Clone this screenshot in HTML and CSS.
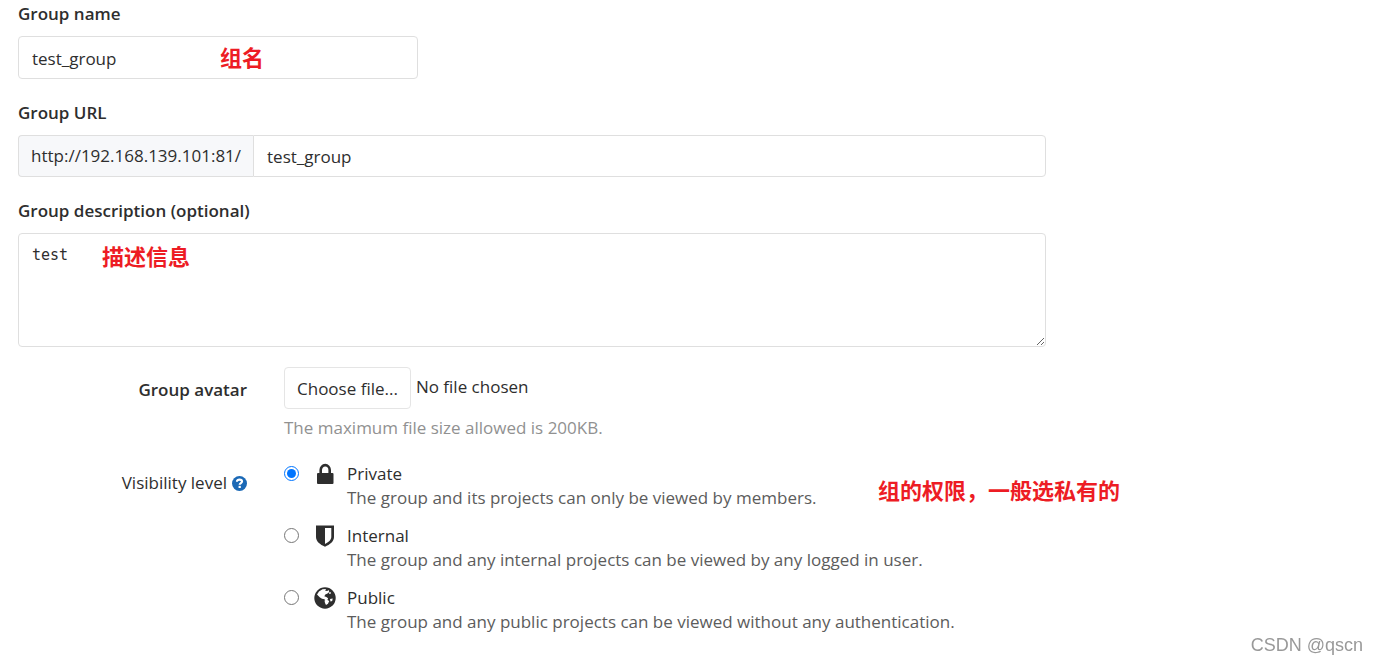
FILE: index.html
```html
<!DOCTYPE html>
<html lang="en">
<head>
<meta charset="utf-8">
<meta name="viewport" content="width=device-width, initial-scale=1">
<title>New group</title>
<link rel="stylesheet" href="styles.css">
</head>
<body>
<form class="group-form">
  <div class="field">
    <label class="field-label" for="group-name">Group name</label>
    <div class="field-control">
      <input class="text-input name-input" id="group-name" type="text" value="test_group">
      <span class="note note-name" lang="zh">组名</span>
    </div>
  </div>

  <div class="field">
    <label class="field-label" for="group-url">Group URL</label>
    <div class="input-group">
      <span class="input-prefix">http://192.168.139.101:81/</span>
      <input class="text-input url-input" id="group-url" type="text" value="test_group">
    </div>
  </div>

  <div class="field">
    <label class="field-label" for="group-description">Group description (optional)</label>
    <div class="field-control">
      <textarea class="text-input description-input" id="group-description" rows="4" spellcheck="false">test</textarea>
      <span class="note note-description" lang="zh">描述信息</span>
    </div>
  </div>

  <div class="row avatar-row">
    <div class="row-label avatar-label" id="avatar-label">Group avatar</div>
    <div class="row-content">
      <div class="file-picker">
        <button class="file-button" type="button" aria-describedby="avatar-label">Choose file...</button>
        <span class="file-name">No file chosen</span>
      </div>
      <div class="help-text">The maximum file size allowed is 200KB.</div>
    </div>
  </div>

  <div class="row visibility-row" role="radiogroup" aria-labelledby="visibility-label">
    <div class="row-label visibility-label">
      <span id="visibility-label">Visibility level</span>
      <a class="help-link" href="#" aria-label="Help"><svg class="help-icon" viewBox="0 0 16 16" aria-hidden="true"><circle cx="8" cy="8" r="8" fill="#1b69b6"/><path d="M5.300 6.200C5.300 4.600 6.400 3.800 8 3.800s2.700.8 2.700 2.100c0 1.600-2.500 1.600-2.500 3.400" fill="none" stroke="#fff" stroke-width="2.300"/><rect x="7" y="10.500" width="2.400" height="2.300" fill="#fff"/></svg></a>
    </div>
    <div class="row-content options">
      <div class="option">
        <input class="option-radio" type="radio" name="visibility" id="private" checked>
        <svg class="option-icon" viewBox="0 0 22 22" aria-hidden="true"><path d="M6.700 11V7a4.500 4.900 0 0 1 9 0V11" fill="none" stroke="#2e2e2e" stroke-width="2.600"/><rect x="3" y="10" width="16.500" height="11" rx="1" fill="#2e2e2e"/></svg>
        <label class="option-text" for="private">Private<span class="option-help">The group and its projects can only be viewed by members.</span></label>
      </div>
      <div class="option">
        <input class="option-radio" type="radio" name="visibility" id="internal">
        <svg class="option-icon" viewBox="0 0 22 22" aria-hidden="true"><path fill="#2e2e2e" fill-rule="evenodd" d="M2 .500h18V12c0 4.500-4 7.500-9 9.700C6 19.500 2 16.500 2 12zM11 3v16c3.500-1.700 6.300-4 6.300-7V3z"/></svg>
        <label class="option-text" for="internal">Internal<span class="option-help">The group and any internal projects can be viewed by any logged in user.</span></label>
      </div>
      <div class="option">
        <input class="option-radio" type="radio" name="visibility" id="public">
        <svg class="option-icon" viewBox="0 0 22 22" aria-hidden="true"><circle cx="11" cy="11" r="10.700" fill="#2e2e2e"/><path fill="#fff" d="M3 7.500 5 4.500 8.500 2.300 12 2l-.800 1.700 2 .300 1.500-1 .500 2-1.700 1.500-2.200 1-1 1.700 2 .700 1.800 1.300-.800 2-1.800.800-1-1.700-2.500-.500L6 10.500z"/><path fill="#fff" d="m15 5.500 1.500-.500.500 1.500-1.700.500zM10.500 13.500l2.500-.800 2.200 1.300-1.200 2.700-2 1.300-1-2z"/><path fill="#fff" d="m16 12 2.700-.500-.500 2.500-1.700.500z"/></svg>
        <label class="option-text" for="public">Public<span class="option-help">The group and any public projects can be viewed without any authentication.</span></label>
      </div>
      <span class="note note-visibility" lang="zh">组的权限，一般选私有的</span>
    </div>
  </div>
</form>
<div class="watermark">CSDN @qscn</div>
</body>
</html>
```

FILE: styles.css
```css
* {
  box-sizing: border-box;
}

body {
  margin: 0;
  background: #fff;
  color: #2e2e2e;
  font-family: "Open Sans", "Noto Sans", sans-serif;
  font-size: 17px;
  line-height: 24px;
}

.group-form {
  max-width: 1064px;
  padding: 2px 18px 0;
}

.field {
  margin-bottom: 22px;
}

.field-label {
  display: block;
  margin-bottom: 10px;
  font-weight: 600;
}

.field-control {
  position: relative;
}

.text-input {
  display: block;
  width: 100%;
  padding: 9px 13px 7px;
  border: 1px solid #dfdfdf;
  border-radius: 4px;
  background: #fff;
  color: #2e2e2e;
  font: inherit;
}

.name-input {
  max-width: 400px;
  height: 43px;
}

.input-group {
  display: flex;
}

.input-prefix {
  flex: none;
  padding: 8px 12px;
  border: 1px solid #dfdfdf;
  border-right: 0;
  border-radius: 4px 0 0 4px;
  background: #f7f8fa;
}

.url-input {
  flex: 1;
  min-width: 0;
  border-radius: 0 4px 4px 0;
}

.description-input {
  height: 114px;
  font-family: "DejaVu Sans Mono", monospace;
  font-size: 15px;
  resize: vertical;
}

.row {
  display: grid;
  grid-template-columns: 229px 1fr;
  column-gap: 37px;
}

.avatar-row {
  margin-top: -2px;
}

.row-label {
  text-align: right;
}

.avatar-label {
  padding-top: 11px;
  font-weight: 600;
}

.file-picker {
  display: flex;
  align-items: center;
  gap: 5px;
}

.file-button {
  padding: 9px 12px 7px;
  border: 1px solid #e5e5e5;
  border-radius: 4px;
  background: #fff;
  color: #2e2e2e;
  font: inherit;
}

.file-name {
  padding-bottom: 3px;
}

.help-text {
  margin-top: 7px;
  color: #919191;
}

.visibility-row {
  margin-top: 22px;
}

.visibility-label {
  display: flex;
  justify-content: flex-end;
  align-items: center;
  align-self: start;
  gap: 5px;
  padding-top: 9px;
}

.help-link {
  display: flex;
}

.help-icon {
  width: 15px;
  height: 15px;
}

.options {
  position: relative;
  display: grid;
  gap: 14px;
}

.option {
  display: flex;
  align-items: flex-start;
}

.option-radio {
  flex: none;
  width: 15px;
  height: 15px;
  margin: 4px 15px 0 0;
}

.option-icon {
  flex: none;
  width: 22px;
  height: 22px;
  margin: 1px 11px 0 0;
}

.option-help {
  display: block;
  color: #5c5c5c;
}

.note {
  position: absolute;
  color: #ed1c24;
  font-family: "Noto Sans CJK SC", sans-serif;
  font-size: 22px;
  font-weight: 700;
  line-height: 30px;
  white-space: nowrap;
  pointer-events: none;
}

.note-name {
  top: 5px;
  left: 202px;
}

.note-description {
  top: 7px;
  left: 84px;
}

.note-visibility {
  top: 12px;
  left: 594px;
}

.watermark {
  position: fixed;
  right: 14px;
  bottom: 7px;
  color: #999;
  font-family: "Liberation Sans", Arial, sans-serif;
  font-size: 18px;
}
```
